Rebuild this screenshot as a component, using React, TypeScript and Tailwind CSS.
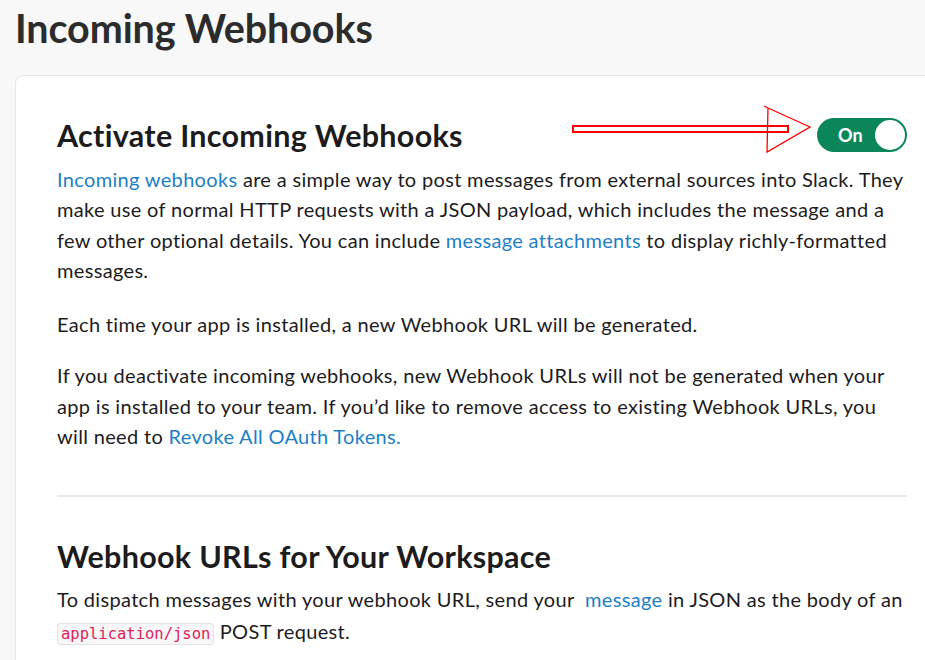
import React from "react";

const link = "text-[#1d7fc4]";

function Toggle() {
  return (
    <div className="flex h-[34px] w-[90px] shrink-0 items-center justify-between rounded-full bg-[#0a8658] pl-[21px] pr-[2px]">
      <span className="text-[18px] font-bold leading-none text-white">On</span>
      <span className="h-[30px] w-[30px] rounded-full bg-white" />
    </div>
  );
}

export default function App() {
  return (
    <div
      className="relative h-[660px] w-[925px] overflow-hidden bg-[#f8f8f8] text-[#1d1c1d]"
      style={{ fontFamily: "Lato, 'Noto Sans', sans-serif" }}
    >
      <div className="pl-[15px] pt-[4px]">
        <h1 className="text-[39.5px] font-bold leading-[48px] tracking-[-0.1px] text-[#2c2c2c]">
          Incoming Webhooks
        </h1>
        <div className="mt-[23px] w-[934px] rounded-[8px] border border-[#e6e6e6] bg-white pb-[48px] pl-[41px] pr-[41px] pt-[41px]">
          <div className="flex items-center justify-between">
            <h2 className="text-[30.5px] font-bold leading-[36px] tracking-[0.3px]">
              Activate Incoming Webhooks
            </h2>
            <Toggle />
          </div>
          <div className="mt-[10.5px] text-[20px] leading-[30.5px] tracking-[0.33px]">
            <p className="mb-[23.5px]">
              <span className={link}>Incoming webhooks</span> are a simple way to post messages from
              external sources into Slack. They make use of normal HTTP requests with a JSON payload,
              which includes the message and a few other optional details. You can include{" "}
              <span className={link}>message attachments</span> to display richly-formatted messages.
            </p>
            <p className="mb-[20.5px]">
              Each time your app is installed, a new Webhook URL will be generated.
            </p>
            <p>
              If you deactivate incoming webhooks, new Webhook URLs will not be generated when your
              app is installed to your team. If you’d like to remove access to existing Webhook URLs,
              you will need to <span className={link}>Revoke All OAuth Tokens.</span>
            </p>
          </div>
          <div className="mt-[43px] h-[2px] bg-[#e8e8e8]" />
          <h2 className="mt-[41px] text-[30.5px] font-bold leading-[36px] tracking-[0.3px]">
            Webhook URLs for Your Workspace
          </h2>
          <div className="mt-[10.5px] text-[20px] leading-[31.5px] tracking-[0.33px]">
            <p>
              To dispatch messages with your webhook URL, send your&nbsp;{" "}
              <span className={link}>message</span> in JSON as the body of an{" "}
              <code
                className="rounded-[3px] border border-[#e3e3e3] bg-[#f7f7f7] px-[3px] py-[1px] text-[15.5px] tracking-normal text-[#e01e5a]"
                style={{ fontFamily: "'DejaVu Sans Mono', 'Liberation Mono', monospace" }}
              >
                application/json
              </code>{" "}
              POST request.
            </p>
          </div>
        </div>
      </div>
      <svg
        className="pointer-events-none absolute left-0 top-0"
        width="925"
        height="660"
        viewBox="0 0 925 660"
      >
        <rect x="573" y="126" width="215" height="6" fill="none" stroke="#ff0000" strokeWidth="2" />
        <polyline
          points="764,106 768,108 810,127 767,152 768,108"
          fill="none"
          stroke="#ff0000"
          strokeWidth="1.3"
        />
      </svg>
    </div>
  );
}
